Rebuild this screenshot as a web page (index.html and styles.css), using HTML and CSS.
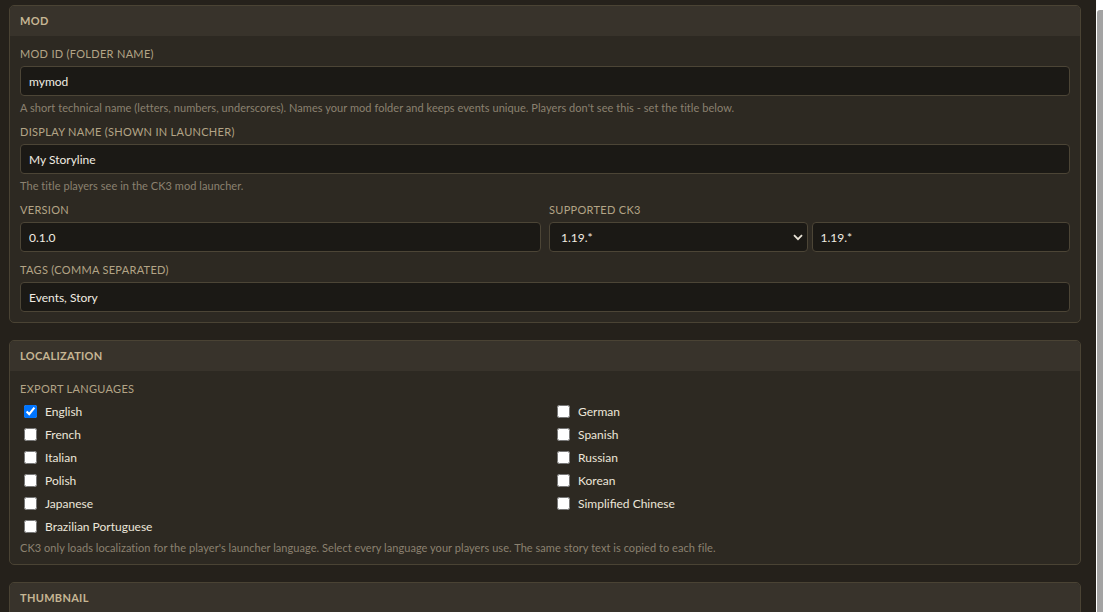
FILE: index.html
```html
<!DOCTYPE html>
<html lang="en">
<head>
    <meta charset="UTF-8">
    <meta name="viewport" content="width=device-width, initial-scale=1.0">
    <title>Mod Settings</title>
    <link rel="stylesheet" href="styles.css">
</head>
<body>
    <div class="page">
        <section class="card">
            <div class="card-head">Mod</div>
            <div class="card-body">
                <div class="field">
                    <label for="mod-id">Mod ID (folder name)</label>
                    <input type="text" id="mod-id" value="mymod">
                    <p class="hint">A short technical name (letters, numbers, underscores). Names your mod folder and keeps events unique. Players don't see this - set the title below.</p>
                </div>
                <div class="field">
                    <label for="display-name">Display name (shown in launcher)</label>
                    <input type="text" id="display-name" value="My Storyline">
                    <p class="hint">The title players see in the CK3 mod launcher.</p>
                </div>
                <div class="field-row">
                    <div class="field">
                        <label for="version">Version</label>
                        <input type="text" id="version" value="0.1.0">
                    </div>
                    <div class="field">
                        <label for="ck3-version">Supported CK3</label>
                        <div class="pair">
                            <div class="select-wrap">
                                <select id="ck3-version">
                                    <option>1.19.*</option>
                                    <option>1.18.*</option>
                                    <option>1.17.*</option>
                                </select>
                                <svg class="chevron" width="10" height="7" viewBox="0 0 10 7"><path d="M1 1.2 L5 5.2 L9 1.2" fill="none" stroke="#e8e2d6" stroke-width="1.8"/></svg>
                            </div>
                            <input type="text" id="ck3-custom" value="1.19.*">
                        </div>
                    </div>
                </div>
                <div class="field">
                    <label for="tags">Tags (comma separated)</label>
                    <input type="text" id="tags" value="Events, Story">
                </div>
            </div>
        </section>

        <section class="card">
            <div class="card-head">Localization</div>
            <div class="card-body">
                <div class="group-label">Export languages</div>
                <div class="lang-grid">
                    <div class="lang-col">
                        <label class="check"><input type="checkbox" checked> English</label>
                        <label class="check"><input type="checkbox"> French</label>
                        <label class="check"><input type="checkbox"> Italian</label>
                        <label class="check"><input type="checkbox"> Polish</label>
                        <label class="check"><input type="checkbox"> Japanese</label>
                        <label class="check"><input type="checkbox"> Brazilian Portuguese</label>
                    </div>
                    <div class="lang-col">
                        <label class="check"><input type="checkbox"> German</label>
                        <label class="check"><input type="checkbox"> Spanish</label>
                        <label class="check"><input type="checkbox"> Russian</label>
                        <label class="check"><input type="checkbox"> Korean</label>
                        <label class="check"><input type="checkbox"> Simplified Chinese</label>
                    </div>
                </div>
                <p class="hint note">CK3 only loads localization for the player's launcher language. Select every language your players use. The same story text is copied to each file.</p>
            </div>
        </section>

        <section class="card">
            <div class="card-head">Thumbnail</div>
            <div class="card-body">
                <p class="hint">Shown next to your mod in the launcher.</p>
            </div>
        </section>
    </div>
    <div class="scroll-track"><div class="scroll-thumb"></div></div>
</body>
</html>
```

FILE: styles.css
```css
html {
    overflow: hidden;
}

body {
    margin: 0;
    background-color: #25211b;
    font-family: 'Lato', 'Open Sans', sans-serif;
    color: #ece6da;
    display: flex;
    align-items: flex-start;
}

.page {
    flex: 1;
    padding: 5px 15px 0 9px;
}

.card {
    background-color: #2d2922;
    border: 1px solid #4a4334;
    border-radius: 5px;
    margin-bottom: 17px;
    overflow: hidden;
}

.card-head {
    background-color: #38332b;
    color: #c6b694;
    font-size: 11px;
    font-weight: bold;
    letter-spacing: 0.3px;
    text-transform: uppercase;
    line-height: 16px;
    padding: 7px 10px;
}

.card-body {
    padding: 10px;
}

.field {
    margin-bottom: 10px;
}

.card-body > .field:last-child {
    margin-bottom: 0;
}

.field label,
.group-label {
    display: block;
    color: #b3a486;
    font-size: 11px;
    letter-spacing: 0.3px;
    line-height: 16px;
    text-transform: uppercase;
    margin-bottom: 4px;
}

input[type="text"],
select {
    display: block;
    width: 100%;
    box-sizing: border-box;
    height: 30px;
    padding: 0 8px;
    background-color: #1b1915;
    border: 1px solid #4c4536;
    border-radius: 4px;
    color: #f1ece2;
    font-family: inherit;
    font-size: 12px;
}

input[type="text"]:focus,
select:focus {
    outline: none;
    border-color: #7a6b4e;
}

select {
    appearance: none;
    padding-left: 11px;
}

.hint {
    margin: 5px 0 0;
    color: #8b8170;
    font-size: 11px;
    line-height: 13px;
    letter-spacing: 0.05px;
}

.field-row {
    display: grid;
    grid-template-columns: 1fr 1fr;
    gap: 8px;
    margin-bottom: 10px;
}

.field-row .field {
    margin-bottom: 0;
}

.pair {
    display: grid;
    grid-template-columns: 1fr 1fr;
    gap: 4px;
}

.select-wrap {
    position: relative;
}

.chevron {
    position: absolute;
    right: 5px;
    top: 12px;
    pointer-events: none;
}

.group-label {
    margin-bottom: 3px;
}

.lang-grid {
    display: grid;
    grid-template-columns: 1fr 1fr;
    gap: 16px;
}

.check {
    display: flex;
    align-items: center;
    height: 23px;
    font-size: 12px;
    color: #ece6da;
}

.check input {
    margin: 0 8px 0 4px;
    width: 13px;
    height: 13px;
}

.note {
    margin-top: 3px;
}

.scroll-track {
    width: 7px;
    height: 100vh;
    background-color: #fff;
    box-sizing: border-box;
    padding: 10px 0 0 1px;
}

.scroll-thumb {
    height: 100%;
    background-color: #a3a3a3;
    border-radius: 3px 0 0 0;
}
```
